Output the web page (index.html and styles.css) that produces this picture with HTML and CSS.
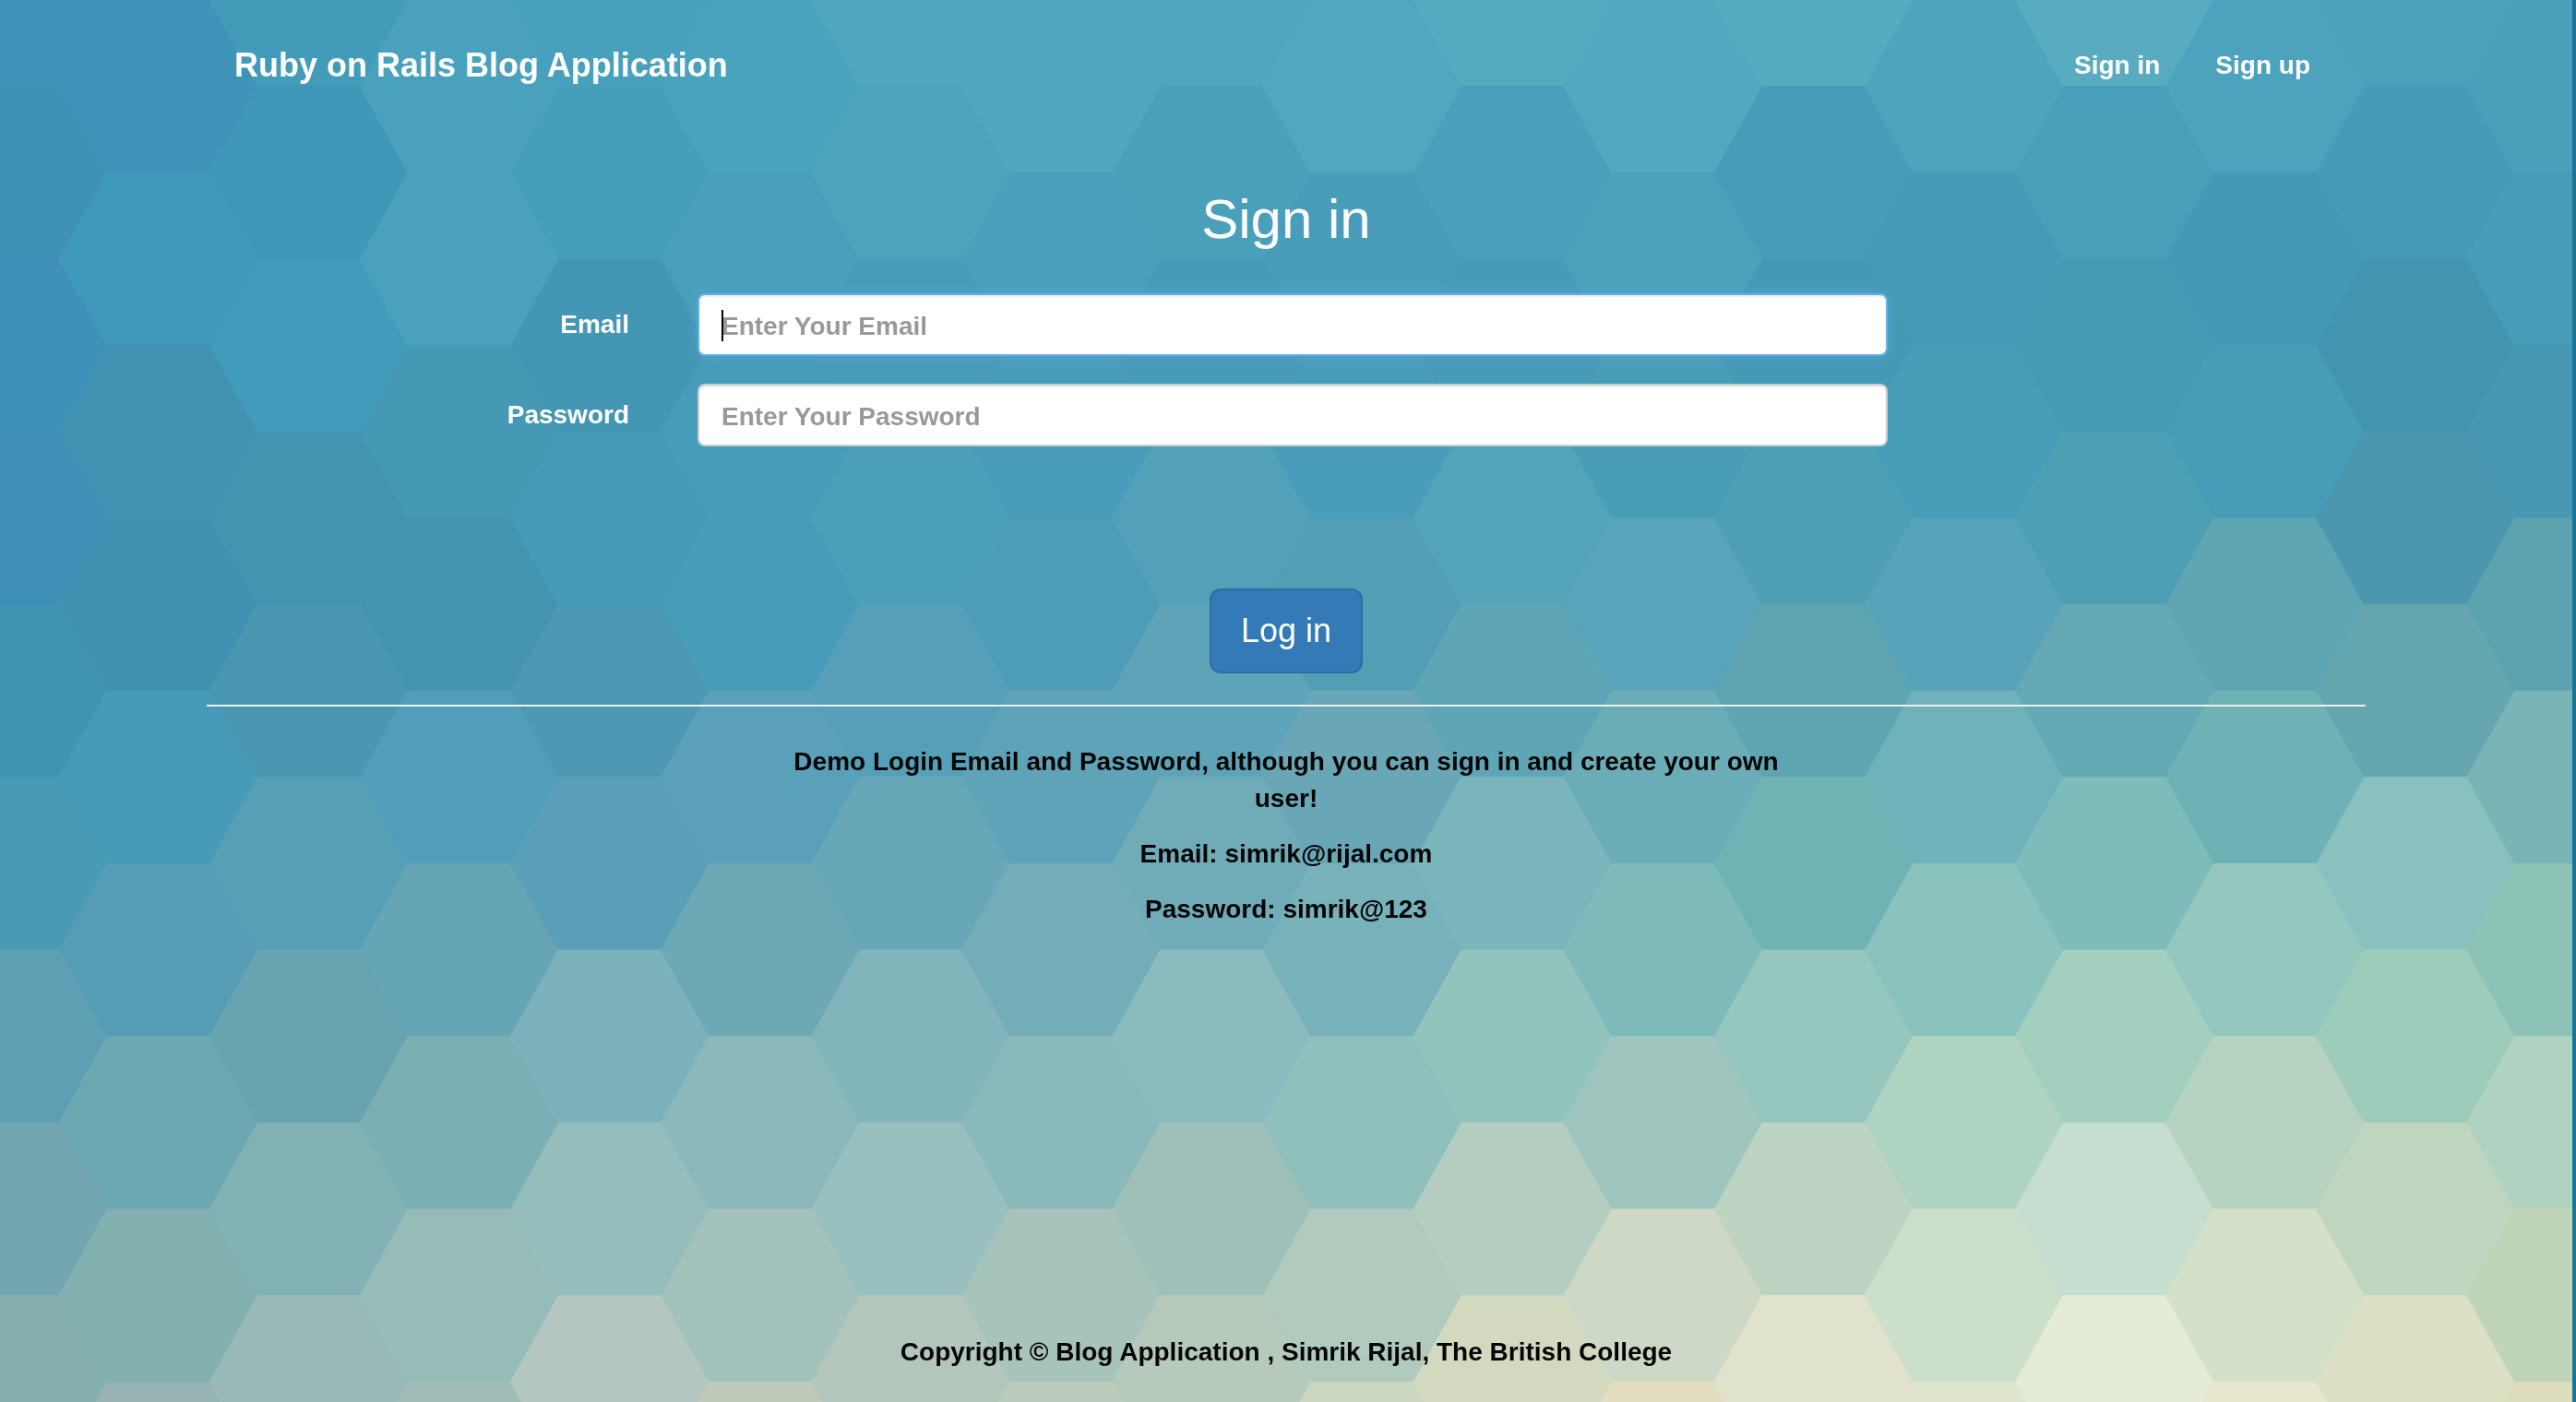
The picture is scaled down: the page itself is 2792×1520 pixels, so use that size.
FILE: index.html
```html
<!DOCTYPE html>
<html lang="en">
<head>
<meta charset="utf-8">
<meta name="viewport" content="width=device-width, initial-scale=1">
<title>Ruby on Rails Blog Application</title>
<link rel="stylesheet" href="styles.css">
</head>
<body>
<svg class="backdrop" id="backdrop" viewBox="0 0 2792 1520" preserveAspectRatio="xMinYMin slice" aria-hidden="true"></svg>
<div class="page">
  <header class="container navbar">
    <a class="brand" href="#">Ruby on Rails Blog Application</a>
    <nav class="nav">
      <a class="nav-link" href="#">Sign in</a>
      <a class="nav-link" href="#">Sign up</a>
    </nav>
  </header>
  <main class="container">
    <h2 class="title">Sign in</h2>
    <form class="form">
      <div class="form-row">
        <label class="label" for="email">Email</label>
        <div class="field field-active">
          <input class="input" id="email" type="email" placeholder="Enter Your Email">
        </div>
      </div>
      <div class="form-row">
        <label class="label" for="password">Password</label>
        <div class="field">
          <input class="input" id="password" type="password" placeholder="Enter Your Password">
        </div>
      </div>
      <button class="button" type="submit">Log in</button>
    </form>
    <hr class="rule">
    <section class="demo">
      <p>Demo Login Email and Password, although you can sign in and create your own user!</p>
      <p>Email: simrik@rijal.com</p>
      <p>Password: simrik@123</p>
    </section>
  </main>
  <footer class="container footer">Copyright © Blog Application , Simrik Rijal, The British College</footer>
</div>
<script src="backdrop.js"></script>
</body>
</html>
```
FILE: backdrop.js
```js
// Honeycomb backdrop: one list of colours per column, top to bottom.
// Even columns sit half a cell higher than odd ones.
const columns = [
  '3f91b8 3e91b3 3e90b8 3e8eb6 4193b3 489ab5 5f9fb3 73a6b1 86afb0',
  '3f93b9 3f99b8 4192b2 4190b2 489bb8 549db5 6ca8b2 82b1b0 98b3b4',
  '439bba 3f98b7 419bba 4393b1 4a97b2 56a0b5 68a4b0 82b2b6 99b9b7',
  '49a1be 4aa1be 4599b5 4494b1 519eba 65a5b4 7ab0b3 96bcb8 a2bdb7',
  '47a1bc 459fba 4397b4 459bb9 4d98b2 589fb7 7bb2bc 94bdbb b3c7c0',
  '49a3be 489fbb 479cb9 479cba 59a0b8 6ca9b4 8bb8ba a3c2bc bfcabb',
  '4fa6bf 4ba4bb 489cba 4b9fbb 569fb8 68a7b8 82b4bb 98c0bf b2c6bb',
  '4fa7bf 4a9fbc 499dbb 4d9db8 5ea3b8 73aeb8 8ab9bb a7c4bc bccbbb',
  '4fa6be 4aa0bb 479bb9 52a1b8 5da4b9 70acb8 8abbbf 9ec0b9 b6cabb',
  '50a7bf 499dba 499dba 529eb5 69a7b6 77b1ba 90c0bc b0cabd cbd6bf',
  '54aabe 4a9fbc 489bb8 54a4b9 5ea6b5 7bb6bd 92c4be b3cec1 d2d9bf',
  '52a8bf 4ba1bb 4a9db7 58a4ba 6aadb6 7fbabb 9fc6be cdd9c6 e3debf',
  '54acbf 479cba 4599b7 4f9fb4 5ea5b1 70b3b5 95c7bf bed4c3 e1e2cc',
  '4ea4bd 459ab8 489db8 57a4ba 70b2b9 8ac2be afd4c2 cbdfcb dfe5cc',
  '59acc0 499fba 479ab6 4d9fb4 64a9b3 7dbcbb a3cfbf c5decf e4ebd6',
  '4da3be 4499b9 479db8 5ea6b4 6fb2b6 94c7be b6d3c1 d4e1c9 e6e7cd',
  '4aa1bb 459bba 4494b1 4b97ae 66a7af 88c1be 9dccbb bed6bf dce0c5',
  '4aa0bb 479db9 4898b4 5ba3af 79b4b7 8dc2b6 b0d3c1 c0d4b8 dcddbd'
];
const pitchX = 163.1, cell = 187.3, flat = 111, slope = 52;
const svg = document.getElementById('backdrop');
columns.forEach((list, col) => {
  const x = -47 + col * pitchX;
  list.split(' ').forEach((colour, row) => {
    const top = row * cell - (col % 2 ? 0 : cell / 2);
    const mid = top + cell / 2;
    const bottom = top + cell;
    const hex = document.createElementNS('http://www.w3.org/2000/svg', 'polygon');
    hex.setAttribute('points', [
      [x, top], [x + flat, top], [x + flat + slope, mid],
      [x + flat, bottom], [x, bottom], [x - slope, mid]
    ].join(' '));
    hex.setAttribute('fill', '#' + colour);
    hex.setAttribute('stroke', '#' + colour);
    svg.append(hex);
  });
});
```
FILE: styles.css
```css
* {
  box-sizing: border-box;
}

body {
  margin: 0;
  font: bold 28px/40px "Helvetica Neue", "Liberation Sans", Arial, sans-serif;
  color: #050505;
}

.backdrop {
  position: fixed;
  inset: 0;
  z-index: -1;
  width: 100%;
  height: 100%;
}

.page {
  display: flex;
  flex-direction: column;
  min-height: 100vh;
  border-right: 4px solid #16759a;
}

.container {
  width: 100%;
  max-width: 2340px;
  margin: 0 auto;
}

.navbar {
  display: flex;
  align-items: center;
  justify-content: space-between;
  min-height: 142px;
  padding: 0 60px 0 30px;
}

.brand,
.nav-link {
  color: #fff;
  text-decoration: none;
}

.brand {
  font-size: 36px;
}

.nav {
  display: flex;
  gap: 60px;
}

.title {
  margin: 63px 0 47px;
  font-size: 60px;
  font-weight: normal;
  line-height: 66px;
  text-align: center;
  color: #fff;
}

.form {
  display: flex;
  flex-direction: column;
  gap: 30px;
}

.form-row {
  display: grid;
  grid-template-columns: 458px minmax(0, 1290px);
  column-gap: 74px;
  align-items: center;
}

.label {
  text-align: right;
  color: #fff;
}

.field {
  position: relative;
}

.input {
  display: block;
  width: 100%;
  height: 68px;
  padding: 4px 24px 0;
  border: 2px solid #ccc;
  border-radius: 8px;
  background: #fff;
  box-shadow: inset 0 2px 2px rgba(0, 0, 0, 0.075);
  color: #555;
  font: inherit;
}

.input::placeholder {
  color: #999;
  opacity: 1;
}

.field-active .input {
  border-color: #66afe9;
  outline: 0;
  box-shadow: inset 0 2px 2px rgba(0, 0, 0, 0.075), 0 0 16px rgba(102, 175, 233, 0.4);
}

/* text cursor of the active field */
.field-active::after {
  content: "";
  position: absolute;
  top: 18px;
  left: 26px;
  width: 2px;
  height: 34px;
  background: #000;
}

.button {
  align-self: center;
  margin-top: 124px;
  padding: 20px 32px;
  border: 2px solid #2e6da4;
  border-radius: 12px;
  background: #337ab7;
  color: #fff;
  font: inherit;
  font-size: 36px;
  font-weight: normal;
  line-height: 48px;
}

.rule {
  height: 2px;
  margin: 34px 0 40px;
  border: 0;
  background: #eee;
}

.demo {
  max-width: 1110px;
  margin: 0 auto;
  text-align: center;
}

.demo p {
  margin: 0 0 20px;
}

.footer {
  margin-top: auto;
  padding-bottom: 34px;
  text-align: center;
}
```
